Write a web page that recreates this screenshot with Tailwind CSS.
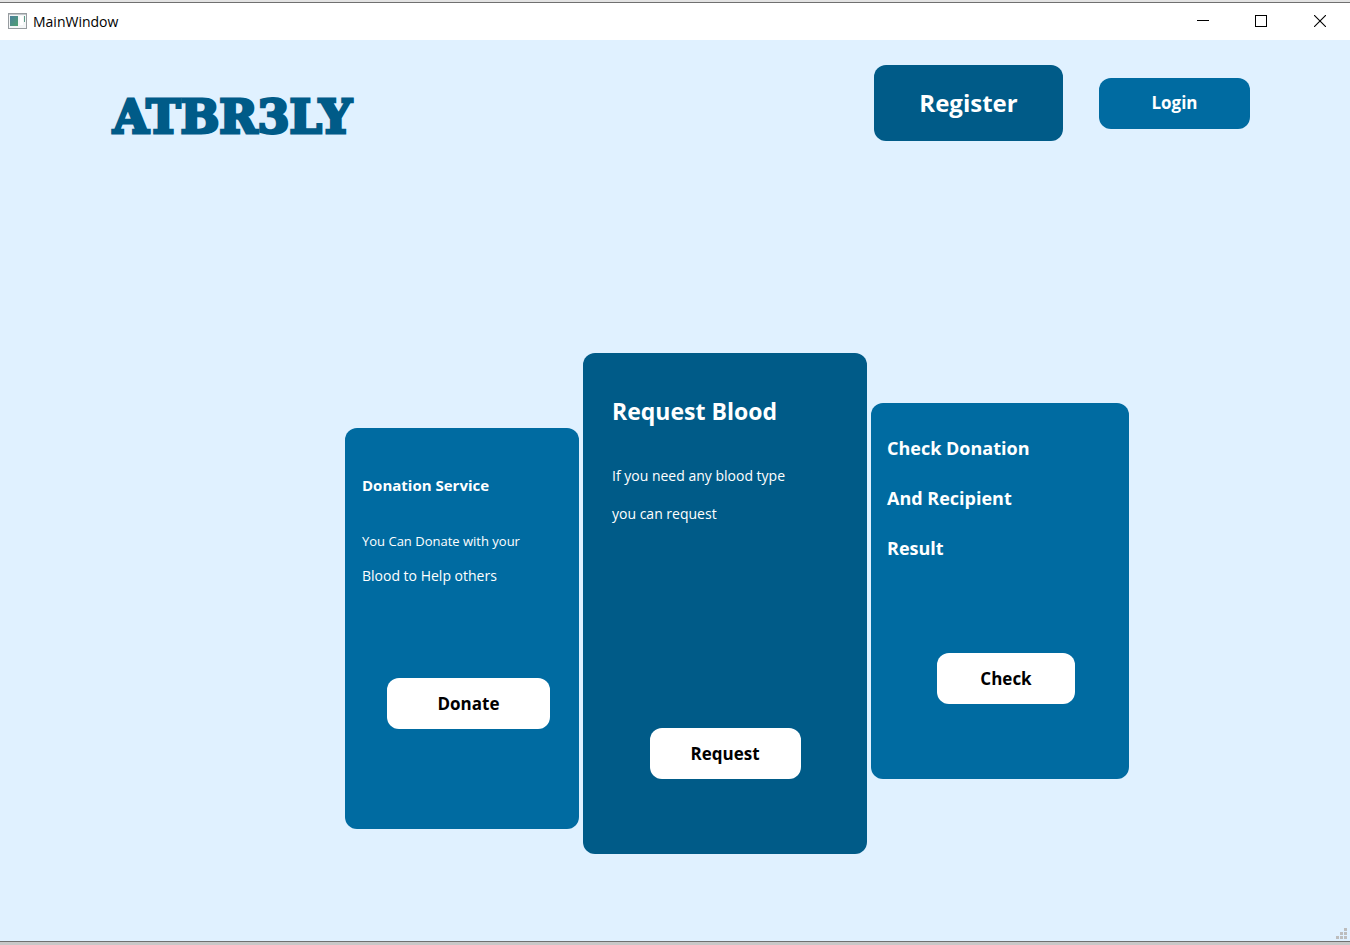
<!DOCTYPE html>
<html lang="en">
<head>
<meta charset="utf-8">
<meta name="viewport" content="width=device-width, initial-scale=1">
<title>MainWindow</title>
<script src="https://cdn.jsdelivr.net/npm/@tailwindcss/browser@4"></script>
</head>
<body class="flex min-h-screen flex-col bg-[#e0f1ff] font-['Open_Sans','Noto_Sans',sans-serif] text-white">
  <div class="h-[3px] border-b border-[#707070] bg-[#e3e3e3]"></div>
  <div class="flex h-[37px] items-center bg-white pl-2 text-black">
    <svg class="mr-[6px] mb-[2px] h-[16px] w-[19px]" viewBox="0 0 19 16" aria-hidden="true">
      <defs>
        <linearGradient id="pane" x1="0" y1="0" x2="1" y2="1"><stop offset="0" stop-color="#4a7f9c"/><stop offset="1" stop-color="#4fa070"/></linearGradient>
      </defs>
      <rect x=".5" y=".5" width="18" height="15" fill="#f4f6f7" stroke="#979ca0"/>
      <rect x="1" y="1" width="17" height="1" fill="#c3c8cb"/>
      <rect x="2" y="3" width="8" height="10" fill="url(#pane)"/>
      <rect x="12" y="3" width="3" height="9" fill="#ffffff"/>
      <rect x="16" y="3" width="1" height="6" fill="#5b9b86"/>
    </svg>
    <span class="text-sm">MainWindow</span>
    <div class="ml-auto flex h-full pb-[2px]">
      <button class="grid w-[58px] place-items-center" aria-label="Minimize">
        <svg class="size-3" viewBox="0 0 12 12" shape-rendering="crispEdges" aria-hidden="true"><rect y="5" width="12" height="1"/></svg>
      </button>
      <button class="grid w-[58px] place-items-center" aria-label="Maximize">
        <svg class="size-3" viewBox="0 0 12 12" fill="none" stroke="#000" shape-rendering="crispEdges" aria-hidden="true"><rect x=".5" y=".5" width="11" height="11"/></svg>
      </button>
      <button class="grid w-[60px] place-items-center" aria-label="Close">
        <svg class="size-3" viewBox="0 0 12 12" stroke="#000" stroke-width="1.1" aria-hidden="true"><path d="M0 0 12 12M12 0 0 12"/></svg>
      </button>
    </div>
  </div>

  <header class="flex items-center pt-[25px] pr-[100px] pl-[113px]">
    <h1 class="mt-7 font-['DejaVu_Serif',serif] text-[46px] leading-[48px] font-bold text-[#005b88] [-webkit-text-stroke:3px_#005b88]">ATBR3LY</h1>
    <nav class="ml-auto flex items-center gap-9 font-bold">
      <button class="h-[76px] w-[189px] rounded-xl bg-[#005b88] text-2xl">Register</button>
      <button class="h-[51px] w-[151px] rounded-xl bg-[#006ba1] text-[17px]">Login</button>
    </nav>
  </header>

  <main class="mt-[212px] flex grow items-start gap-1 pl-[345px]">
    <section class="mt-[75px] flex h-[401px] w-[234px] flex-col rounded-xl bg-[#006ba1] px-[17px] pt-[45px]">
      <h2 class="text-[15px] leading-6 font-bold">Donation Service</h2>
      <p class="mt-8 text-[13px] leading-6">You Can Donate with your</p>
      <p class="mt-[11px] text-sm leading-6">Blood to Help others</p>
      <button class="mt-[90px] ml-[25px] h-[51px] w-[163px] rounded-xl bg-white text-[17px] font-bold text-black">Donate</button>
    </section>
    <section class="flex h-[501px] w-[284px] flex-col rounded-xl bg-[#005b88] px-[29px] pt-[42px]">
      <h2 class="text-[23px] leading-8 font-bold">Request Blood</h2>
      <p class="mt-[30px] text-sm leading-[38px]">If you need any blood type<br>you can request</p>
      <button class="mt-[195px] h-[51px] w-[151px] self-center rounded-xl bg-white text-[17px] font-bold text-black">Request</button>
    </section>
    <section class="mt-[50px] flex h-[376px] w-[258px] flex-col rounded-xl bg-[#006ba1] px-4 pt-5">
      <h2 class="text-[18px] leading-[50px] font-bold">Check Donation<br>And Recipient<br>Result</h2>
      <button class="mt-20 ml-[50px] h-[51px] w-[138px] rounded-xl bg-white text-[17px] font-bold text-black">Check</button>
    </section>
  </main>

  <footer>
    <svg class="mr-[3px] mb-[2px] ml-auto h-[11px] w-[11px]" viewBox="0 0 11 11" fill="#bdbdbd" shape-rendering="crispEdges" aria-hidden="true">
      <path d="M8 0h3v3H8zM4 4h3v3H4zM8 4h3v3H8zM0 8h3v3H0zM4 8h3v3H4zM8 8h3v3H8z"/>
    </svg>
    <div class="h-1 border-t border-[#707070] bg-[#c8c8c8]"></div>
  </footer>
</body>
</html>
